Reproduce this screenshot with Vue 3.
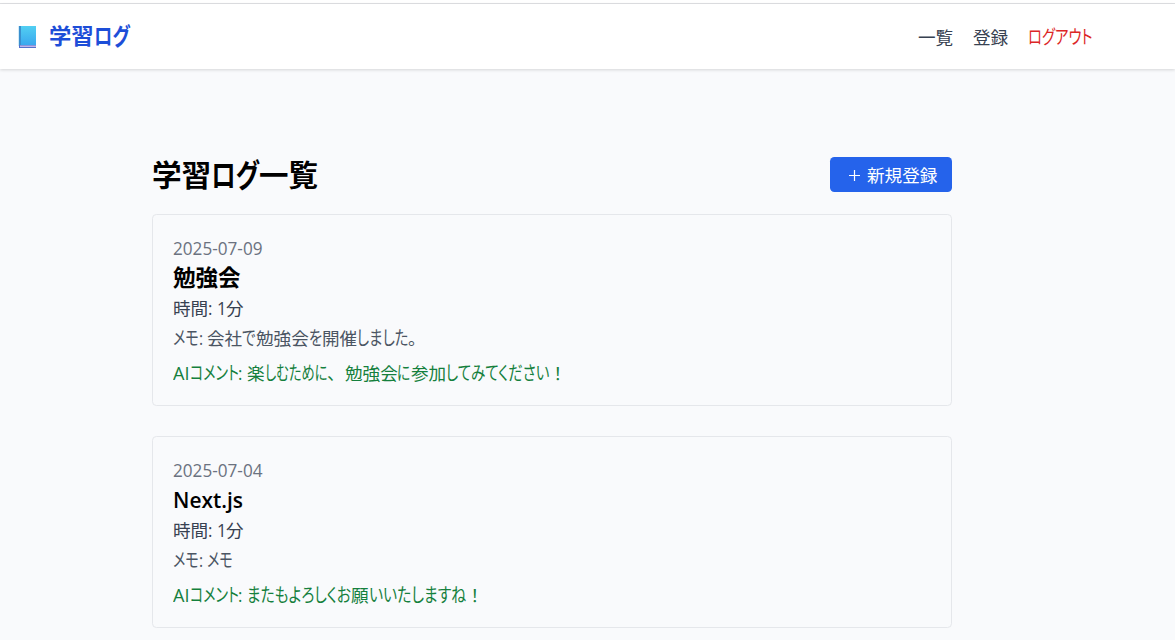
<template>
    <div class='page'>
        <div class='top-strip'></div>
        <header class='navbar'>
            <a class='logo'>
                <svg class='book' width='20' height='24' viewBox='0 0 20 24'>
                    <defs>
                        <linearGradient id='cover' x1='0' y1='0' x2='0' y2='1'>
                            <stop offset='0' stop-color='#52cff2' />
                            <stop offset='1' stop-color='#3aa8ee' />
                        </linearGradient>
                    </defs>
                    <rect x='0.5' y='1' width='2' height='20' fill='#a6d8f2' />
                    <rect x='1' y='19.5' width='17' height='3.5' fill='#5570cc' />
                    <rect x='2' y='20.6' width='16' height='1.2' fill='#d9c8f0' />
                    <rect x='1' y='1' width='17' height='19' fill='url(#cover)' />
                    <rect x='1' y='1' width='2' height='19' fill='#3a8fce' />
                </svg>
                <span class='logo-text'><span v-for='(run,i) in logo_runs' :key='i' class='run' :class='{kana:is_kana(run[0])}'><span v-fit='run[1]'>{{ run[0] }}</span></span></span>
            </a>
            <nav class='links'>
                <a v-for='link in links' :key='link.text' :class='{logout:link.logout}'><span class='run' :class='{kana:is_kana(link.text)}'><span v-fit='link.width'>{{ link.text }}</span></span></a>
            </nav>
        </header>

        <main class='container'>
            <div class='title-row'>
                <h1><span v-for='(run,i) in heading_runs' :key='i' class='run' :class='{kana:is_kana(run[0])}'><span v-fit='run[1]'>{{ run[0] }}</span></span></h1>
                <a class='new-btn'>
                    <svg width='12' height='12' viewBox='0 0 12 12'><path d='M6.5 1V12M1 6.5H12' stroke='white' stroke-width='1.2' /></svg>
                    <span>新規登録</span>
                </a>
            </div>

            <div v-for='log in logs' :key='log.id' class='card'>
                <p v-for='(row,name) in log.rows' :key='name' :class='name'><span v-for='(run,i) in row' :key='i' class='run' :class='{kana:is_kana(run[0])}'><span v-fit='run[1]'>{{ run[0] }}</span></span></p>
            </div>
        </main>
    </div>
</template>

<script setup>
const is_kana = (text) => /^[ぁ-んァ-ヶ]/.test(text);

// squeezes a piece of text to the given width (narrow, slightly tall UI kana next to full width kanji)
const vFit = {
    mounted(el,binding){
        const natural = el.getBoundingClientRect().width;
        const tall = is_kana(el.textContent) ? 1.07 : 1;
        el.style.transform = `scale(${binding.value / natural},${tall})`;
        el.parentElement.style.width = binding.value + 'px';
    }
};

// every run is [text, width in px]
const logo_runs = [['学習',44.6],['ログ',36]];
const heading_runs = [['学習',59.2],['ログ',48],['一覧',59]];

const links = [
    {text:'一覧',width:35.2},
    {text:'登録',width:35.2},
    {text:'ログアウト',width:64.6,logout:true},
];

const time_row = [['時間',35.2],[': ',8.8],['1',9.5],['分',17.6]];
const memo_label = [['メモ',25.8],[': ',8.2]];
const comment_label = [['AI',16.5],['コメント',48.8],[': ',8.7]];

const logs = [
    {
        id:1,
        rows:{
            date:[['2025-07-09',89.5]],
            title:[['勉強会',67.6]],
            time:time_row,
            memo:[...memo_label,['会社',35.2],['で',13.6],['勉強会',52.8],['を',13.2],['開催',35.2],['しました',51.5],['。',17.6]],
            comment:[...comment_label,['楽',17.6],['しむために',62.4],['、',17.6],['勉強会',52.8],['に',13.3],['参加',35.2],['してみてください',103.4],['！',17.6]],
        },
    },
    {
        id:2,
        rows:{
            date:[['2025-07-04',89.5]],
            title:[['Next.js',70]],
            time:time_row,
            memo:[...memo_label,['メモ',25.8]],
            comment:[...comment_label,['またもよろしくお',104],['願',17.6],['いいたしますね',97.2],['！',17.6]],
        },
    },
];
</script>

<style>
body{background-color:#f9fafc;overflow:hidden;}
</style>

<style scoped>
.page{font-family:"Open Sans","Noto Sans CJK JP",sans-serif;font-size:17.6px;line-height:30px;color:black;height:640px;overflow:hidden;}
.run{display:inline-block;white-space:pre;}
.run > span{display:inline-block;transform-origin:left center;}
.kana{font-feature-settings:"palt";}

.top-strip{height:3px;background-color:white;border-bottom:1px solid #e0e1e4;}
.navbar{display:flex;justify-content:space-between;align-items:center;height:65px;padding:0 82px 0 18px;background-color:white;box-shadow:0 1px 3px rgba(0,0,0,0.15);}
.logo{display:flex;align-items:center;gap:11px;color:#1d4ed8;font-size:22px;font-weight:600;}
.logo-text{padding-bottom:3px;}
.book{display:block;}
.links{display:flex;gap:20px;color:#374151;}
.logout{color:#dc2626;}

.container{width:800px;margin-left:152px;padding-top:88px;}
.title-row{display:flex;justify-content:space-between;align-items:center;height:35px;margin-bottom:22px;}
h1{margin:0;font-size:29.3px;font-weight:600;line-height:36px;}
.new-btn{display:flex;align-items:center;gap:7px;box-sizing:border-box;width:122px;height:35px;padding-left:18px;border-radius:4.4px;background-color:#2563eb;color:white;}

.card{box-sizing:border-box;height:192px;margin-bottom:30px;padding:18px 20px;border:1px solid #e5e7eb;border-radius:4.4px;}
.card p{margin:0;height:30px;}
.card .date{color:#6b7280;}
.card .title{font-size:22.4px;font-weight:600;}
.card .time{color:#374151;}
.card .memo{color:#4b5563;}
.card .comment{margin-top:5px;color:#15803d;}
</style>
